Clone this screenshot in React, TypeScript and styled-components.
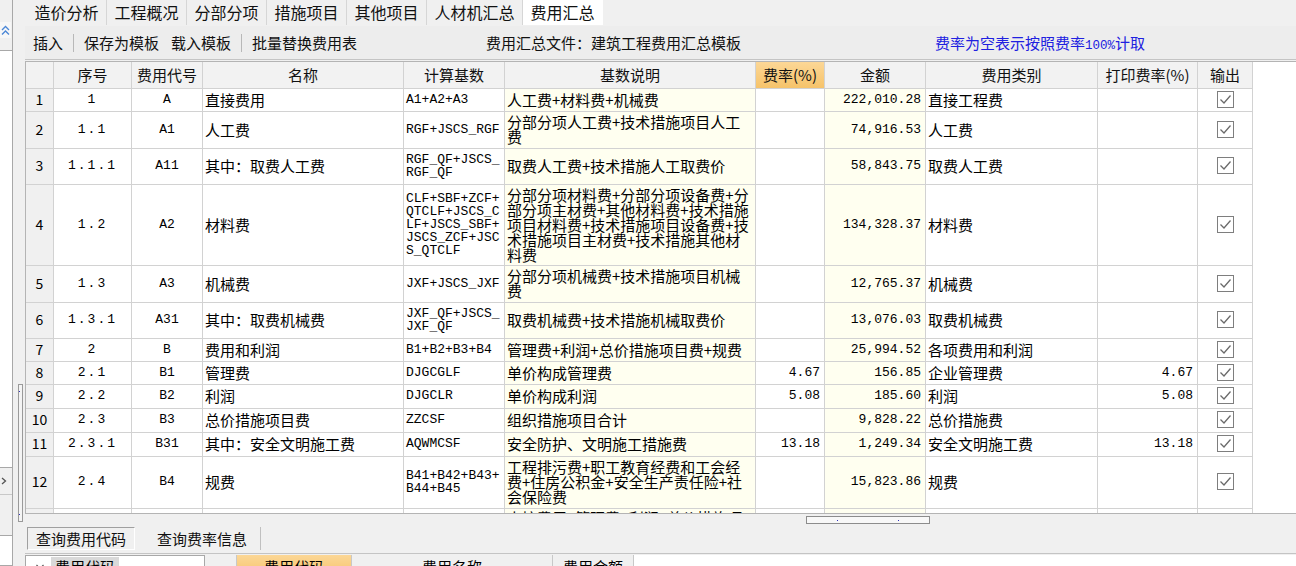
import React from 'react';
import styled, { createGlobalStyle } from 'styled-components';

const CJK = `"Noto Sans CJK SC", "Liberation Sans", sans-serif`;
const MONO = `"Liberation Mono", "Noto Sans CJK SC", monospace`;

const GlobalStyle = createGlobalStyle`
  html, body {
    margin: 0;
    padding: 0;
  }
  body {
    background: #f0f0f0;
    font-family: ${CJK};
    color: #000;
    overflow: hidden;
  }
`;

const COLS = '28px 78px 71px 201px 101px 251px 69px 101px 172px 100px 55px';

interface FeeRow {
  h: number;
  no: string;
  code: string;
  name: string;
  base: string;
  desc: string;
  rate: string;
  amount: string;
  kind: string;
  printRate: string;
  out: boolean;
}

const rows: FeeRow[] = [
  { h: 23, no: '1', code: 'A', name: '直接费用', base: 'A1+A2+A3', desc: '人工费+材料费+机械费', rate: '', amount: '222,010.28', kind: '直接工程费', printRate: '', out: true },
  { h: 37, no: '1.1', code: 'A1', name: '人工费', base: 'RGF+JSCS_RGF', desc: '分部分项人工费+技术措施项目人工\n费', rate: '', amount: '74,916.53', kind: '人工费', printRate: '', out: true },
  { h: 36, no: '1.1.1', code: 'A11', name: '其中：取费人工费', base: 'RGF_QF+JSCS_\nRGF_QF', desc: '取费人工费+技术措施人工取费价', rate: '', amount: '58,843.75', kind: '取费人工费', printRate: '', out: true },
  { h: 81, no: '1.2', code: 'A2', name: '材料费', base: 'CLF+SBF+ZCF+\nQTCLF+JSCS_C\nLF+JSCS_SBF+\nJSCS_ZCF+JSC\nS_QTCLF', desc: '分部分项材料费+分部分项设备费+分\n部分项主材费+其他材料费+技术措施\n项目材料费+技术措施项目设备费+技\n术措施项目主材费+技术措施其他材\n料费', rate: '', amount: '134,328.37', kind: '材料费', printRate: '', out: true },
  { h: 37, no: '1.3', code: 'A3', name: '机械费', base: 'JXF+JSCS_JXF', desc: '分部分项机械费+技术措施项目机械\n费', rate: '', amount: '12,765.37', kind: '机械费', printRate: '', out: true },
  { h: 36, no: '1.3.1', code: 'A31', name: '其中：取费机械费', base: 'JXF_QF+JSCS_\nJXF_QF', desc: '取费机械费+技术措施机械取费价', rate: '', amount: '13,076.03', kind: '取费机械费', printRate: '', out: true },
  { h: 23, no: '2', code: 'B', name: '费用和利润', base: 'B1+B2+B3+B4', desc: '管理费+利润+总价措施项目费+规费', rate: '', amount: '25,994.52', kind: '各项费用和利润', printRate: '', out: true },
  { h: 23, no: '2.1', code: 'B1', name: '管理费', base: 'DJGCGLF', desc: '单价构成管理费', rate: '4.67', amount: '156.85', kind: '企业管理费', printRate: '4.67', out: true },
  { h: 24, no: '2.2', code: 'B2', name: '利润', base: 'DJGCLR', desc: '单价构成利润', rate: '5.08', amount: '185.60', kind: '利润', printRate: '5.08', out: true },
  { h: 24, no: '2.3', code: 'B3', name: '总价措施项目费', base: 'ZZCSF', desc: '组织措施项目合计', rate: '', amount: '9,828.22', kind: '总价措施费', printRate: '', out: true },
  { h: 24, no: '2.3.1', code: 'B31', name: '其中：安全文明施工费', base: 'AQWMCSF', desc: '安全防护、文明施工措施费', rate: '13.18', amount: '1,249.34', kind: '安全文明施工费', printRate: '13.18', out: true },
  { h: 52, no: '2.4', code: 'B4', name: '规费', base: 'B41+B42+B43+\nB44+B45', desc: '工程排污费+职工教育经费和工会经\n费+住房公积金+安全生产责任险+社\n会保险费', rate: '', amount: '15,823.86', kind: '规费', printRate: '', out: true },
  // partly hidden under the bottom edge of the grid
  { h: 52, no: '', code: '', name: '', base: '', desc: '直接费用+管理费+利润+总价措施项', rate: '', amount: '', kind: '', printRate: '', out: false },
];

const Page = styled.div`
  display: flex;
  width: 1296px;
  height: 566px;
  overflow: hidden;
`;

/* ---------- left strip ---------- */

const LeftStrip = styled.div`
  flex: none;
  width: 25px;
  display: flex;
`;

const LeftPanel = styled.div`
  width: 12px;
  border-right: 1px solid #a8a8a8;
  display: flex;
  flex-direction: column;
`;

const CollapseBtn = styled.div`
  flex: none;
  margin-top: 22px;
  height: 16px;
  width: 11px;
  display: flex;
  align-items: center;
  justify-content: center;
  background: #f7f7f7;
`;

const SideWhite = styled.div<{ $h?: number }>`
  background: #fff;
  border-top: 1px solid #a8a8a8;
  ${p => (p.$h ? `height: ${p.$h}px; flex: none;` : 'flex: 1;')}
  border-bottom: 1px solid #a8a8a8;
`;

const SideArrow = styled.div`
  flex: none;
  height: 26px;
  display: flex;
  align-items: center;
  border-bottom: 1px solid #c8c8c8;
`;

const SideGap = styled.div<{ $h: number }>`
  flex: none;
  height: ${p => p.$h}px;
`;

const SplitCol = styled.div`
  flex: 1;
  display: flex;
  flex-direction: column;
  align-items: flex-end;
  padding-right: 2px;
`;

const SplitHandle = styled.div`
  margin-top: 384px;
  width: 3px;
  height: 124px;
  border: 1px solid #9a9a9a;
  background: #f4f4f4;
  display: flex;
  flex-direction: column;
  justify-content: space-between;
  padding: 6px 0;
  &::before,
  &::after {
    content: '';
    width: 1px;
    height: 1px;
    background: #3030c0;
  }
`;

/* ---------- main ---------- */

const Main = styled.div`
  flex: 1;
  display: flex;
  flex-direction: column;
  min-width: 0;
  height: 566px;
  overflow: hidden;
`;

const TabBar = styled.div`
  flex: none;
  height: 26px;
  display: flex;
  padding-left: 2px;
`;

const Tab = styled.div<{ $active?: boolean }>`
  height: 25px;
  padding: 0 7.5px 1px;
  box-sizing: border-box;
  display: flex;
  align-items: center;
  font-size: 16px;
  color: #111;
  background: ${p => (p.$active ? '#fff' : 'transparent')};
  border-right: 1px solid ${p => (p.$active ? '#fff' : '#d6d6d6')};
`;

const Toolbar = styled.div`
  flex: none;
  height: 33px;
  border-bottom: 1px solid #c4c4c4;
  display: flex;
  align-items: center;
  padding-left: 8px;
  font-size: 15px;
  background: #ededed;
`;

const ToolItem = styled.span<{ $gap?: number }>`
  margin-left: ${p => p.$gap ?? 0}px;
  color: #111;
  white-space: nowrap;
`;

const ToolSep = styled.span`
  width: 1px;
  height: 18px;
  background: #b8b8b8;
  margin: 0 10px;
`;

const Note = styled.span`
  margin-left: 194px;
  color: #2020e0;
  white-space: nowrap;
`;

const NoteNum = styled.span`
  font-family: ${MONO};
  font-size: 12.5px;
`;

const GridBox = styled.div`
  flex: none;
  margin-top: 1px;
  height: 453px;
  box-sizing: border-box;
  border-top: 1px solid #b4b4b4;
  border-left: 1px solid #b4b4b4;
  border-bottom: 1px solid #b4b4b4;
  background: #fff;
  overflow: hidden;
`;

const GridRow = styled.div<{ $h: number }>`
  display: grid;
  grid-template-columns: ${COLS};
  height: ${p => p.$h}px;
`;

const Cell = styled.div<{
  $align?: 'left' | 'center' | 'right';
  $mono?: boolean;
  $bg?: string;
  $spaced?: boolean;
  $top?: boolean;
}>`
  box-sizing: border-box;
  display: flex;
  align-items: ${p => (p.$top ? 'flex-start' : 'center')};
  justify-content: ${p =>
    p.$align === 'center' ? 'center' : p.$align === 'right' ? 'flex-end' : 'flex-start'};
  text-align: ${p => p.$align ?? 'left'};
  padding: ${p => (p.$top ? '1px' : '0')} ${p => (p.$align === 'right' ? 4 : 2)}px 2px 2px;
  border-right: 1px solid #d2d2d2;
  border-bottom: 1px solid #d2d2d2;
  background: ${p => p.$bg ?? '#fff'};
  font-family: ${p => (p.$mono ? MONO : CJK)};
  font-size: ${p => (p.$mono ? 13 : 15)}px;
  line-height: ${p => (p.$mono ? 13 : 15)}px;
  letter-spacing: ${p => (p.$spaced ? 2 : 0)}px;
  white-space: pre;
  overflow: hidden;
  color: #000;
`;

const HeadCell = styled.div<{ $hot?: boolean }>`
  box-sizing: border-box;
  display: flex;
  align-items: center;
  justify-content: center;
  padding-bottom: 2px;
  border-right: 1px solid #d2d2d2;
  border-bottom: 1px solid #d2d2d2;
  background: ${p => (p.$hot ? 'linear-gradient(#fcd796, #f6c36a)' : '#f2f2f2')};
  font-size: 15px;
  color: #111;
  white-space: nowrap;
`;

const RowNum = styled(Cell)`
  background: #f0f0f0;
  font-size: 14px;
  justify-content: center;
  padding: 0 0 2px;
`;

/* ---------- bottom ---------- */

const BottomBar = styled.div`
  flex: none;
  height: 39px;
  display: flex;
  flex-direction: column;
  padding-top: 2px;
  box-sizing: border-box;
`;

const Grip = styled.div`
  flex: none;
  margin-left: 781px;
  width: 122px;
  height: 6px;
  border: 1px solid #8c8c8c;
  background: #f8f8f8;
  display: flex;
  justify-content: space-around;
  align-items: center;
  &::before,
  &::after {
    content: '';
    width: 1px;
    height: 1px;
    background: #3030c0;
  }
`;

const QueryTabs = styled.div`
  flex: none;
  margin-top: 3px;
  height: 23px;
  display: flex;
  padding-left: 2px;
`;

const QueryTab = styled.div<{ $active?: boolean }>`
  box-sizing: border-box;
  height: 23px;
  display: flex;
  align-items: center;
  padding: 0 8px;
  font-size: 15px;
  color: #111;
  ${p =>
    p.$active
      ? `border: 1px solid; border-color: #a0a0a0 #fff #fff #a0a0a0; margin-right: 10px;`
      : `padding: 0 13px 0 12px; border-right: 1px solid #c0c0c0;`}
`;

const BottomPanels = styled.div`
  flex: 1;
  min-height: 0;
  overflow: hidden;
  display: flex;
  gap: 5px;
  border-top: 1px solid #c4c4c4;
  padding-top: 1px;
`;

const TreePanel = styled.div`
  width: 180px;
  height: 40px;
  box-sizing: border-box;
  border: 1px solid #a8a8a8;
  background: #fff;
  display: flex;
  align-items: flex-start;
  padding: 1px 0 0 9px;
  gap: 6px;
`;

const TreeLabel = styled.span`
  background: #d9d9d9;
  font-size: 15px;
  padding: 0 4px;
  line-height: 20px;
`;

const CodeTable = styled.div`
  flex: 1;
  height: 40px;
  background: #fff;
  display: grid;
  grid-template-columns: 27px 115px 201px 81px;
  align-content: start;
`;

const CodeHead = styled.div<{ $hot?: boolean }>`
  height: 22px;
  display: flex;
  align-items: center;
  justify-content: center;
  border-right: 1px solid #c8c8c8;
  background: ${p => (p.$hot ? 'linear-gradient(#fcd796, #f6c36a)' : '#f0f0f0')};
  font-size: 15px;
`;

const CheckBox = () => (
  <svg width="17" height="17" viewBox="0 0 17 17">
    <rect x="0.5" y="0.5" width="16" height="16" fill="#fff" stroke="#7e7e7e" />
    <path d="M3.5 8.5 L7 12 L13.5 4.5" fill="none" stroke="#6a6a6a" strokeWidth="1.3" />
  </svg>
);

const headers = ['', '序号', '费用代号', '名称', '计算基数', '基数说明', '费率(%)', '金额', '费用类别', '打印费率(%)', '输出'];
const ivory = '#fffff0';

export default function App() {
  return (
    <>
      <GlobalStyle />
      <Page>
        <LeftStrip>
          <LeftPanel>
            <CollapseBtn>
              <svg width="9" height="11" viewBox="0 0 9 11">
                <path d="M1 5 L4.5 1.5 L8 5 M1 9.5 L4.5 6 L8 9.5" fill="none" stroke="#4a86d6" strokeWidth="1.3" />
              </svg>
            </CollapseBtn>
            <SideGap $h={12} />
            <SideWhite $h={416} />
            <SideArrow>
              <svg width="8" height="10" viewBox="0 0 8 10">
                <path d="M2 2 L5.5 5 L2 8" fill="none" stroke="#555" strokeWidth="1.3" />
              </svg>
            </SideArrow>
            <SideGap $h={40} />
            <SideWhite />
          </LeftPanel>
          <SplitCol>
            <SplitHandle />
          </SplitCol>
        </LeftStrip>

        <Main>
          <TabBar>
            {['造价分析', '工程概况', '分部分项', '措施项目', '其他项目', '人材机汇总'].map(t => (
              <Tab key={t}>{t}</Tab>
            ))}
            <Tab $active>费用汇总</Tab>
          </TabBar>

          <Toolbar>
            <ToolItem>插入</ToolItem>
            <ToolSep />
            <ToolItem>保存为模板</ToolItem>
            <ToolItem $gap={12}>载入模板</ToolItem>
            <ToolSep />
            <ToolItem>批量替换费用表</ToolItem>
            <ToolItem $gap={129}>费用汇总文件：建筑工程费用汇总模板</ToolItem>
            <Note>
              费率为空表示按照费率<NoteNum>100%</NoteNum>计取
            </Note>
          </Toolbar>

          <GridBox>
            <GridRow $h={27}>
              {headers.map((h, i) => (
                <HeadCell key={i} $hot={i === 6}>
                  {h}
                </HeadCell>
              ))}
            </GridRow>
            {rows.map((r, i) => (
              <GridRow key={i} $h={r.h}>
                <RowNum>{r.out ? i + 1 : ''}</RowNum>
                <Cell $align="center" $mono $spaced>
                  {r.no}
                </Cell>
                <Cell $align="center" $mono>
                  {r.code}
                </Cell>
                <Cell>{r.name}</Cell>
                <Cell $mono>{r.base}</Cell>
                <Cell $bg={ivory} $top={!r.out}>
                  {r.desc}
                </Cell>
                <Cell $align="right" $mono>
                  {r.rate}
                </Cell>
                <Cell $align="right" $mono $bg={ivory}>
                  {r.amount}
                </Cell>
                <Cell>{r.kind}</Cell>
                <Cell $align="right" $mono>
                  {r.printRate}
                </Cell>
                <Cell $align="center">{r.out && <CheckBox />}</Cell>
              </GridRow>
            ))}
          </GridBox>

          <BottomBar>
            <Grip />
            <QueryTabs>
              <QueryTab $active>查询费用代码</QueryTab>
              <QueryTab>查询费率信息</QueryTab>
            </QueryTabs>
          </BottomBar>

          <BottomPanels>
            <TreePanel>
              <svg width="10" height="20" viewBox="0 0 10 20">
                <path d="M1.5 8 L5 11.5 L8.5 8" fill="none" stroke="#555" strokeWidth="1.2" />
              </svg>
              <TreeLabel>费用代码</TreeLabel>
            </TreePanel>
            <CodeTable>
              <CodeHead />
              <CodeHead $hot>费用代码</CodeHead>
              <CodeHead>费用名称</CodeHead>
              <CodeHead>费用金额</CodeHead>
            </CodeTable>
          </BottomPanels>
        </Main>
      </Page>
    </>
  );
}
